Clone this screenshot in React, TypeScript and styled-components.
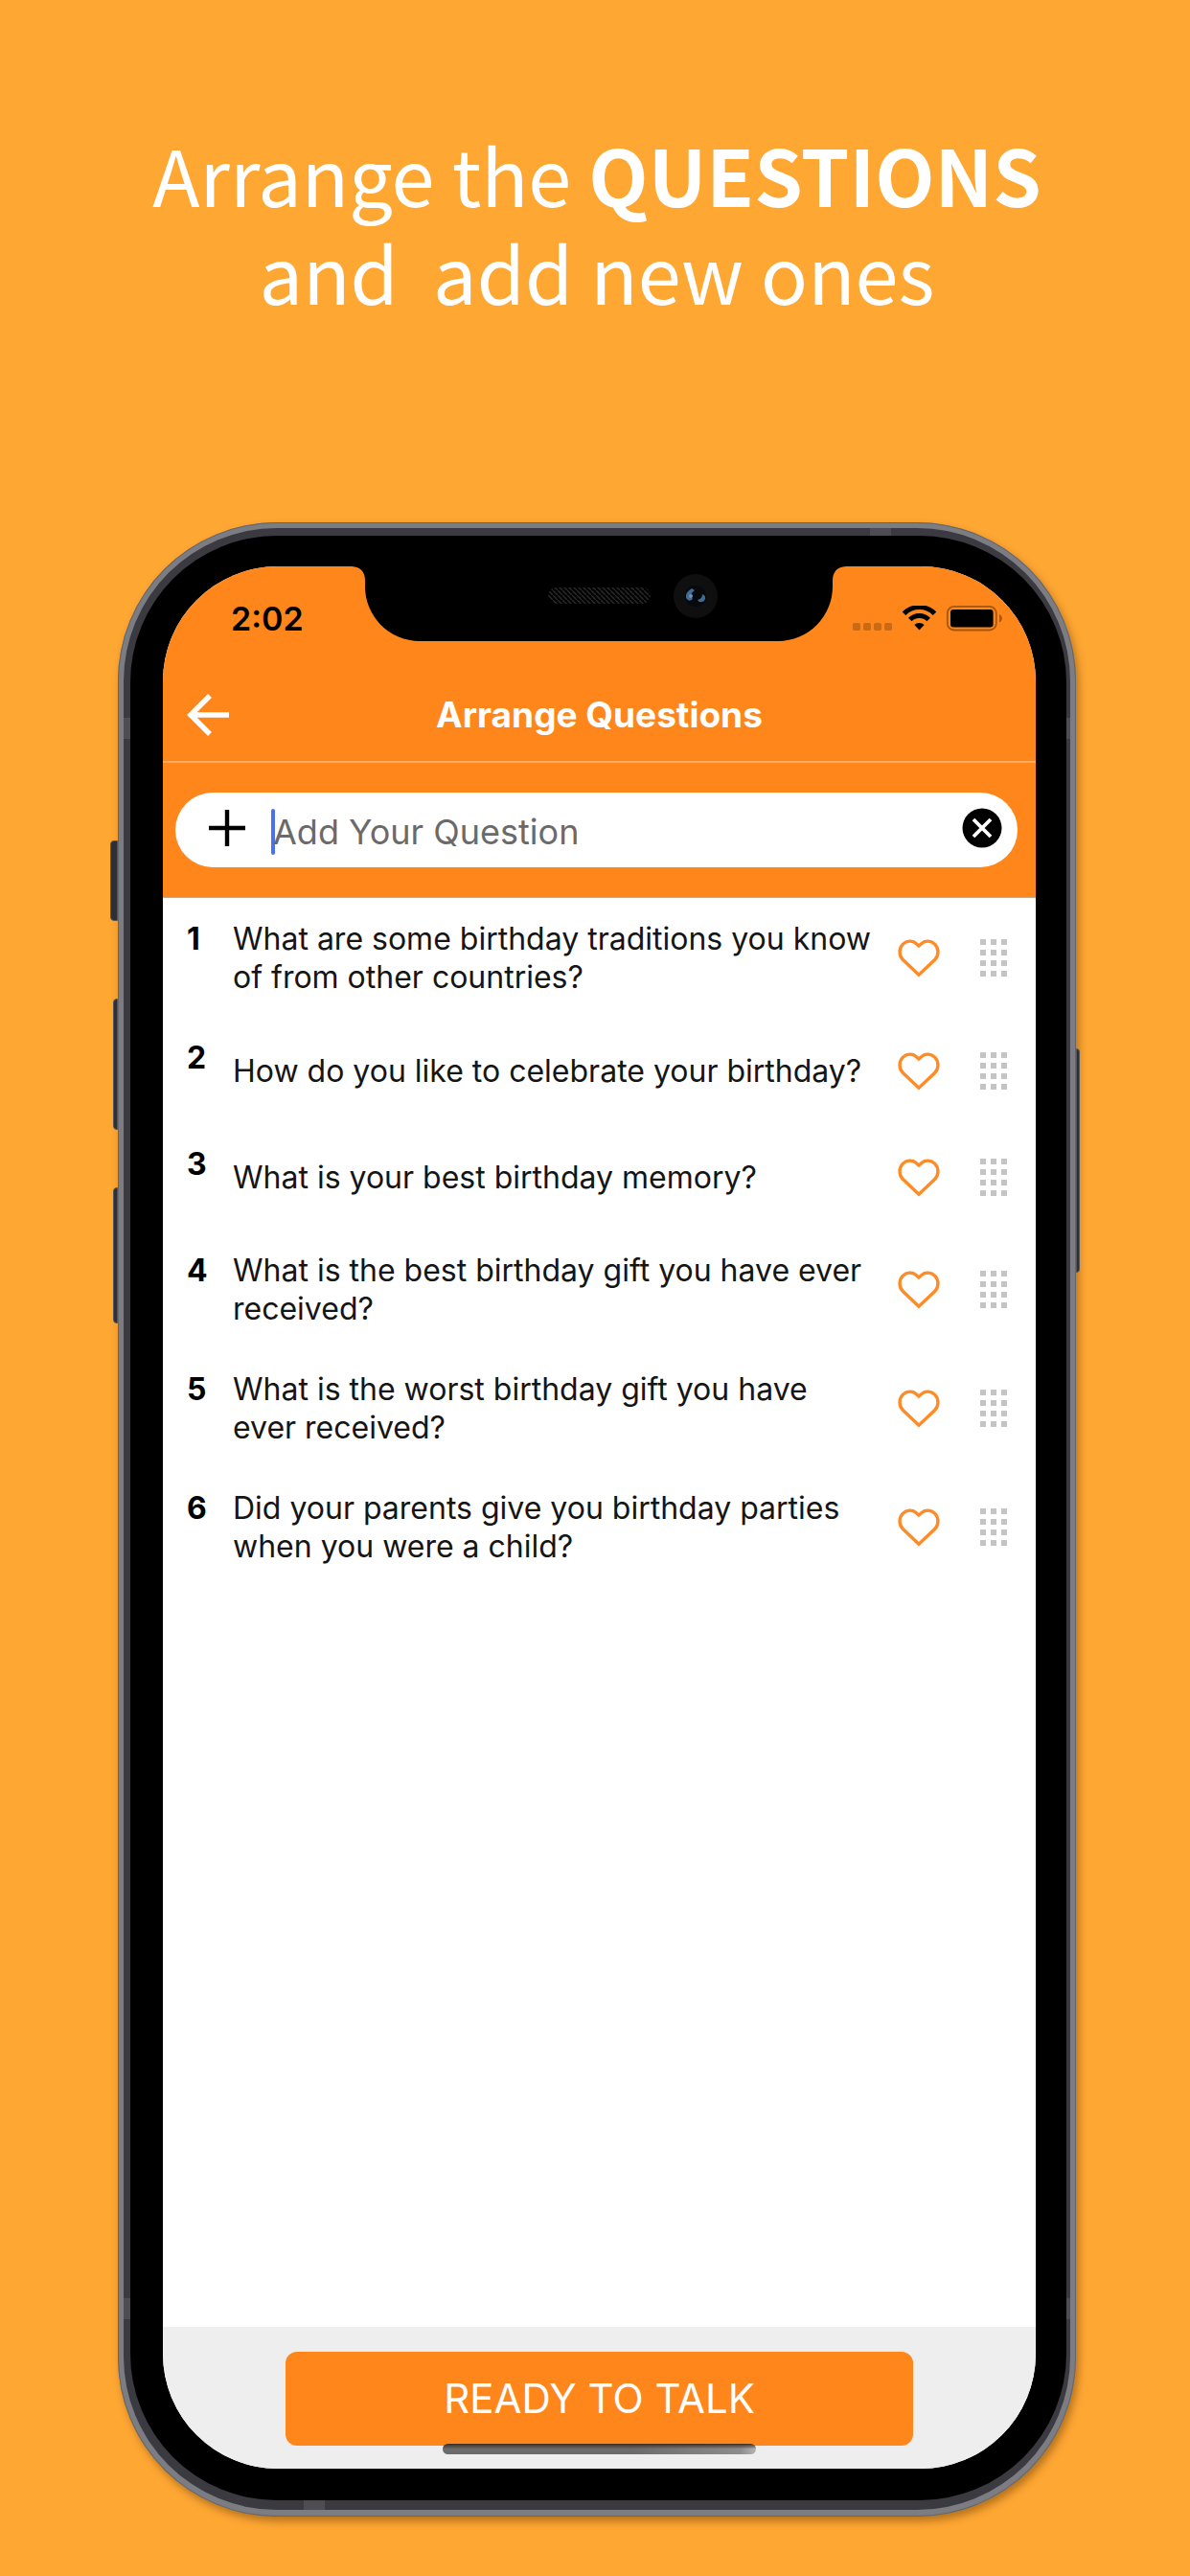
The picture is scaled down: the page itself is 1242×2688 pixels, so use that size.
import React from "react";
import styled, { createGlobalStyle } from "styled-components";

const orange = "#ff861a";

const GlobalStyle = createGlobalStyle`
  *, *::before, *::after { box-sizing: border-box; }
  body { margin: 0; background: #ffa733; }
  button { border: 0; padding: 0; background: none; font: inherit; color: inherit; cursor: pointer; }
  svg { display: block; }
`;

const Page = styled.main`
  min-height: 100vh;
  display: flex;
  flex-direction: column;
  padding: 130px 119px 62px 123px;
  background: #ffa733;
  font-family: Inter, "Liberation Sans", sans-serif;
`;

const Headline = styled.h1`
  margin: 0 0 211px;
  text-align: center;
  white-space: pre-wrap;
  color: #fff;
  font-family: "Noto Sans CJK SC", "Noto Sans", sans-serif;
  font-weight: 400;
  font-size: 81px;
  line-height: 102px;
`;

const Phone = styled.div`
  position: relative;
  flex: 1;
  display: flex;
  padding: 6px 6px 7px;
  border-radius: 166px;
  background: #7c7c83;
  box-shadow: inset 0 0 0 1px #65656b, 3px 5px 8px rgba(90, 50, 0, 0.45);
`;

const Rim = styled.div`
  flex: 1;
  display: flex;
  padding: 8px 4px 10px 7px;
  border-radius: 160px;
  background: #3a3a40;
`;

const Bezel = styled.div`
  flex: 1;
  display: flex;
  padding: 32px 32px 33px 34px;
  border-radius: 153px;
  background: #000;
`;

const Screen = styled.div`
  position: relative;
  flex: 1;
  display: flex;
  flex-direction: column;
  overflow: hidden;
  border-radius: 120px;
  background: #fff;
`;

const SideKey = styled.span<{ $side: "left" | "right"; $top: number; $height: number; $depth: number }>`
  position: absolute;
  ${(p) => p.$side}: -${(p) => p.$depth}px;
  top: ${(p) => p.$top}px;
  width: ${(p) => p.$depth}px;
  height: ${(p) => p.$height}px;
  border: 1px solid #55555a;
  border-radius: ${(p) => (p.$side === "left" ? "4px 0 0 4px" : "0 4px 4px 0")};
  background: #2e2f34;
`;

const Antenna = styled.span<{ $edge: "left" | "right" | "top" | "bottom"; $from: "left" | "right" | "top" | "bottom"; $at: number }>`
  position: absolute;
  ${(p) => p.$edge}: ${(p) => (p.$edge === "bottom" ? 7 : 6)}px;
  ${(p) => p.$from}: ${(p) => p.$at}px;
  width: ${(p) => (p.$edge === "top" || p.$edge === "bottom" ? 22 : p.$edge === "left" ? 7 : 4)}px;
  height: ${(p) => (p.$edge === "top" ? 8 : p.$edge === "bottom" ? 10 : 22)}px;
  background: #4d4d53;
`;

const Notch = styled.svg`
  position: absolute;
  top: 0;
  left: 50%;
  width: 516px;
  height: 78px;
  margin-left: -259px;
`;

const StatusBar = styled.div`
  display: flex;
  align-items: center;
  justify-content: space-between;
  height: 108px;
  padding: 2px 35px 0 71px;
  background: ${orange};
  color: #000;
`;

const Clock = styled.span`
  font-size: 34px;
  font-weight: 600;
  line-height: 40px;
`;

const StatusIcons = styled.svg`
  width: 156px;
  height: 28px;
`;

const NavBar = styled.header`
  display: grid;
  grid-template-columns: 1fr auto 1fr;
  align-items: center;
  height: 97px;
  padding: 0 25px 2px;
  border-bottom: 2px solid #ffab60;
  background: ${orange};
  color: #fff;
`;

const IconButton = styled.button`
  flex: none;
  display: flex;
  align-items: center;
  justify-content: center;
  width: 44px;
  height: 44px;
`;

const Title = styled.h2`
  margin: 0;
  font-size: 37px;
  font-weight: 700;
  line-height: 44px;
`;

const AddArea = styled.form`
  padding: 31px 19px 31px 13px;
  border-bottom: 1px solid #c9a98a;
  background: ${orange};
`;

const AddField = styled.div`
  display: flex;
  align-items: center;
  height: 78px;
  padding: 0 15px 4px 32px;
  border-radius: 39px;
  background: #fff;
`;

const Caret = styled.span`
  width: 4px;
  height: 48px;
  margin: 8px -2px 0 24px;
  border-radius: 2px;
  background: #4b72ee;
`;

const AddInput = styled.input`
  flex: 1;
  min-width: 0;
  height: 48px;
  margin-top: 8px;
  padding: 0;
  border: 0;
  outline: 0;
  background: transparent;
  color: #111;
  font-family: inherit;
  font-size: 36px;
  line-height: 48px;
  &::placeholder { color: #6a6a6a; opacity: 1; }
`;

const List = styled.ol`
  flex: 1;
  margin: 0;
  padding: 0;
  list-style: none;
`;

const Row = styled.li`
  display: flex;
  align-items: center;
  min-height: 111px;
  padding: 23px 30px 21px 25px;
`;

const Index = styled.span`
  flex: none;
  align-self: flex-start;
  width: 48px;
  font-size: 32px;
  font-weight: 700;
  line-height: 40px;
  color: #000;
`;

const Question = styled.p`
  flex: 1;
  margin: 0 22px 0 0;
  font-size: 32px;
  line-height: 40px;
  color: #151515;
`;

const Handle = styled.button`
  flex: none;
  width: 28px;
  height: 40px;
  margin-left: 42px;
  cursor: grab;
`;

const Footer = styled.footer`
  position: relative;
  height: 148px;
  padding: 26px 14% 24px;
  background: #eee;
`;

const ReadyButton = styled.button`
  width: 100%;
  height: 98px;
  border-radius: 12px;
  background: ${orange};
  color: #fff;
  font-size: 42px;
  line-height: 52px;
`;

const HomeIndicator = styled.span`
  position: absolute;
  bottom: 15px;
  left: 32%;
  width: 36%;
  height: 11px;
  border-radius: 6px;
  background: linear-gradient(#3c2d20, rgba(0, 0, 0, 0) 50%), linear-gradient(90deg, #6b6b6b 60%, #8c8c8c 95%, #b4b4b4);
`;

const HeartIcon = () => (
  <svg width="44" height="40" viewBox="0 0 44 40" fill="none" stroke="#ff8b26" strokeWidth="3.4" aria-hidden="true">
    <path d="M22 37.2 L5.4 21.4 C1 17.2 1 9.6 5.2 5.4 C9.2 1.4 15.2 1.2 18.8 4.2 L22 7 L25.2 4.2 C28.8 1.2 34.8 1.4 38.8 5.4 C43 9.6 43 17.2 38.6 21.4 Z" />
  </svg>
);

const DotsIcon = () => (
  <svg width="28" height="40" viewBox="0 0 28 40" fill="#c4c4c4" aria-hidden="true">
    {[0, 11, 22, 33].map((y) => [0, 11, 22].map((x) => <rect key={`${x}-${y}`} x={x} y={y} width="6" height="6" />))}
  </svg>
);

const questions = [
  "What are some birthday traditions you know of from other countries?",
  "How do you like to celebrate your birthday?",
  "What is your best birthday memory?",
  "What is the best birthday gift you have ever received?",
  "What is the worst birthday gift you have ever received?",
  "Did your parents give you birthday parties when you were a child?",
];

export default function App() {
  return (
    <Page>
      <GlobalStyle />
      <Headline>
        Arrange the <b>QUESTIONS</b>
        {"\nand  add new ones"}
      </Headline>
      <Phone>
        <SideKey $side="left" $top={332} $height={84} $depth={8} />
        <SideKey $side="left" $top={497} $height={137} $depth={5} />
        <SideKey $side="left" $top={694} $height={142} $depth={5} />
        <SideKey $side="right" $top={549} $height={234} $depth={4} />
        <Rim>
          <Bezel>
            <Screen>
              <StatusBar>
                <Clock>2:02</Clock>
                <StatusIcons viewBox="0 0 156 28" aria-hidden="true">
                  {[0, 11, 22, 33].map((x) => (
                    <rect key={x} x={x} y="18" width="8" height="8" rx="2" fill="#c96a17" />
                  ))}
                  <g fill="none" stroke="#000" strokeWidth="5">
                    <path d="M53.5 8.3 A22.5 22.5 0 0 1 85.5 8.3" />
                    <path d="M59.8 14.6 A13.6 13.6 0 0 1 79.2 14.6" />
                  </g>
                  <path d="M64.3 20 A7.5 7.5 0 0 1 74.7 20 L69.5 25.6 Z" />
                  <rect x="98.8" y="0.9" width="51" height="24.6" rx="7" fill="none" stroke="#a8560c" strokeWidth="1.8" />
                  <rect x="102" y="4" width="44.6" height="18.4" rx="3" />
                  <path d="M153 9 Q156 10.5 156 13.2 Q156 16 153 17.4 Z" fill="#a8560c" />
                </StatusIcons>
              </StatusBar>
              <NavBar>
                <IconButton type="button" aria-label="Back">
                  <svg width="44" height="44" viewBox="0 0 44 44" fill="none" stroke="#fff" strokeWidth="5.5" aria-hidden="true">
                    <path d="M44 22 H5 M24 2 L4 22 L24 42" />
                  </svg>
                </IconButton>
                <Title>Arrange Questions</Title>
              </NavBar>
              <AddArea>
                <AddField>
                  <IconButton type="button" aria-label="Add">
                    <svg width="38" height="38" viewBox="0 0 38 38" stroke="#000" strokeWidth="4.4" aria-hidden="true">
                      <path d="M19 0 V38 M0 19 H38" />
                    </svg>
                  </IconButton>
                  <Caret />
                  <AddInput aria-label="Add Your Question" placeholder="Add Your Question" />
                  <IconButton type="button" aria-label="Clear">
                    <svg width="42" height="42" viewBox="0 0 42 42" aria-hidden="true">
                      <circle cx="21" cy="21" r="20.5" />
                      <path d="M12 12 L30 30 M30 12 L12 30" stroke="#fff" strokeWidth="3.8" />
                    </svg>
                  </IconButton>
                </AddField>
              </AddArea>
              <List>
                {questions.map((text, i) => (
                  <Row key={text}>
                    <Index>{i + 1}</Index>
                    <Question>{text}</Question>
                    <IconButton type="button" aria-label="Favourite">
                      <HeartIcon />
                    </IconButton>
                    <Handle type="button" aria-label="Reorder">
                      <DotsIcon />
                    </Handle>
                  </Row>
                ))}
              </List>
              <Footer>
                <ReadyButton type="button">READY TO TALK</ReadyButton>
                <HomeIndicator />
              </Footer>
              <Notch viewBox="0 0 516 78" aria-hidden="true">
                <defs>
                  <pattern id="mesh" width="5" height="5" patternUnits="userSpaceOnUse">
                    <path d="M0 0 L5 5" stroke="#2a2a2a" strokeWidth="1.4" />
                  </pattern>
                </defs>
                <path d="M0 0 H516 Q502 1 502 15 V20 A57 57 0 0 1 445 78 H71 A57 57 0 0 1 14 20 V15 Q14 1 0 0 Z" />
                <rect x="205" y="22" width="107" height="17" rx="8.5" fill="url(#mesh)" />
                <circle cx="359" cy="31" r="23" fill="#0f0f10" />
                <circle cx="359" cy="31" r="11" fill="#07090c" />
                <path d="M355 23 Q348 27 349 33 Q352 38 356 34 Q352 29 358 25 Z M366 29 Q371 31 368 36 Q363 39 361 35 Q366 34 366 29 Z" fill="#3f6c94" />
                <circle cx="354" cy="31" r="2" fill="#6d93b5" />
              </Notch>
            </Screen>
          </Bezel>
        </Rim>
        <Antenna $edge="left" $from="top" $at={204} />
        <Antenna $edge="right" $from="top" $at={204} />
        <Antenna $edge="top" $from="right" $at={193} />
        <Antenna $edge="left" $from="bottom" $at={206} />
        <Antenna $edge="right" $from="bottom" $at={206} />
        <Antenna $edge="bottom" $from="left" $at={194} />
      </Phone>
    </Page>
  );
}
